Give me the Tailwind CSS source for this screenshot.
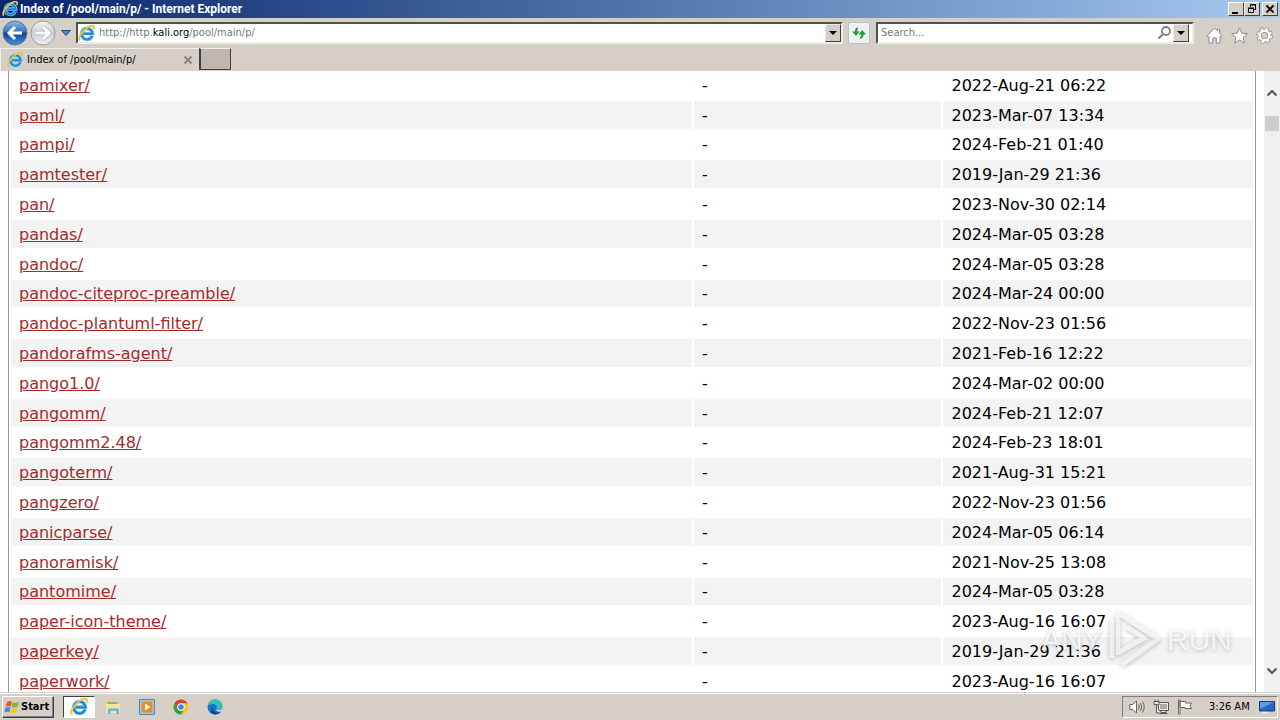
<!DOCTYPE html>
<html lang="en">

<head>
    <meta charset="UTF-8" />
    <meta name="viewport" content="width=device-width, initial-scale=1.0" />
    <title>Index of /pool/main/p/</title>
    <script src="https://cdn.jsdelivr.net/npm/@tailwindcss/browser@4"></script>
</head>

<body class="h-screen flex flex-col overflow-hidden bg-[#d5cfc7] text-black text-[11px] leading-4 font-['DejaVu_Sans_Condensed','DejaVu_Sans',sans-serif]">
    <!-- Shared icons -->
    <svg class="hidden">
        <symbol id="ie" viewBox="0 0 16 16">
            <path d="M13.4 10.2A5.2 5.2 0 1 1 13.7 8H5" fill="none" stroke="#7ccdf4" stroke-width="3.4" />
            <path d="M13.4 10.2A5.2 5.2 0 1 1 13.7 8.3H5" fill="none" stroke="#2388d0" stroke-width="2" />
            <path d="M2 14.6C-.8 12.6 3.600 5.500 9.500 2 14-.6 16.200.6 14.600 4" fill="none" stroke="#f2c230" stroke-width="1.800" />
        </symbol>
        <symbol id="down" viewBox="0 0 8 8">
            <path d="M0 2h8L4 6z" fill="currentColor" />
        </symbol>
    </svg>

    <!-- TITLE BAR -->
    <header class="h-[18px] shrink-0 flex items-center pl-[2px] pr-[2px] gap-[2px] bg-linear-to-r from-[#0a246a] to-[#a6caf0] text-white">
        <svg class="size-4"><use href="#ie" /></svg>
        <h1 class="flex-1 font-bold text-[12px] font-['Roboto',sans-serif]">Index of /pool/main/p/ - Internet Explorer</h1>
        <div class="flex text-black">
            <button aria-label="Minimize" class="w-4 h-[14px] bg-[#d5cfc7] border border-white border-r-[#404040] border-b-[#404040]">
                <svg viewBox="0 0 14 12" class="w-full h-full"><path d="M3 9h6v2H3z" /></svg>
            </button>
            <button aria-label="Restore" class="w-4 h-[14px] bg-[#d5cfc7] border border-white border-r-[#404040] border-b-[#404040]">
                <svg viewBox="0 0 14 12" class="w-full h-full" fill="none" stroke="currentColor">
                    <path d="M5.500 4V1.500h5v5H9M5 2h6M3.500 5.500h5v4h-5zM3 5h6" />
                </svg>
            </button>
            <button aria-label="Close" class="ml-[2px] w-4 h-[14px] bg-[#d5cfc7] border border-white border-r-[#404040] border-b-[#404040]">
                <svg viewBox="0 0 14 12" class="w-full h-full" stroke="currentColor" stroke-width="1.800"><path d="M3.500 2.500l7 7M10.500 2.500l-7 7" /></svg>
            </button>
        </div>
    </header>

    <!-- ADDRESS BAR -->
    <div class="h-[30px] shrink-0 flex items-center pl-[2px] pr-[7px]">
        <button aria-label="Back" class="size-[26px]">
            <svg viewBox="0 0 26 26">
                <defs>
                    <linearGradient id="backFill" x2="0" y2="1">
                        <stop offset="0" stop-color="#8db9e8" />
                        <stop offset=".45" stop-color="#3976c2" />
                        <stop offset=".5" stop-color="#123f91" />
                        <stop offset="1" stop-color="#3d98e0" />
                    </linearGradient>
                    <linearGradient id="forwardFill" x2="0" y2="1">
                        <stop offset="0" stop-color="#f4f6f8" />
                        <stop offset=".5" stop-color="#c9d0d8" />
                        <stop offset="1" stop-color="#eef2f5" />
                    </linearGradient>
                </defs>
                <circle cx="13" cy="13" r="12" fill="url(#backFill)" stroke="#5a7399" />
                <path d="M20 13H8M13 7l-6 6 6 6" fill="none" stroke="#fff" stroke-width="3" />
            </svg>
        </button>
        <button aria-label="Forward" class="ml-[2px] size-[26px]">
            <svg viewBox="0 0 26 26">
                <circle cx="13" cy="13" r="12" fill="url(#forwardFill)" stroke="#9a9da0" />
                <path d="M6 13h12M13 7l6 6-6 6" fill="none" stroke="#a4a9ae" stroke-width="4" />
                <path d="M6 13h12M13 7l6 6-6 6" fill="none" stroke="#fff" stroke-width="3" />
            </svg>
        </button>
        <button aria-label="Recent pages" class="ml-1 w-3">
            <svg viewBox="0 0 12 8"><path d="M1.500 1.500h9L6 6.500z" fill="#3c8fd0" stroke="#1c4a78" /></svg>
        </button>
        <div class="ml-1 flex-1 h-[22px] flex items-center bg-white border-2 border-[#808080] border-t-[#55504a] border-l-[#55504a] border-r-[#efece8] border-b-[#efece8]">
            <svg class="size-[17px]"><use href="#ie" /></svg>
            <!-- The host stands out in black from the rest of the address -->
            <div role="textbox" aria-label="Address" contenteditable="true" class="ml-1 flex-1 text-[#777] outline-none">http://http.<span class="text-black">kali.org</span>/pool/main/p/</div>
            <button aria-label="Show address list" class="w-4 h-[18px] flex items-center justify-center bg-[#d5cfc7] border border-[#eee] border-r-[#404040] border-b-[#404040]">
                <svg class="size-2"><use href="#down" /></svg>
            </button>
        </div>
        <button aria-label="Refresh" class="ml-[5px] w-[22px] h-[22px] flex items-center justify-center bg-[#eef1f3] border border-[#b9bfc4] rounded-xs">
            <svg viewBox="0 0 16 16" class="size-4" fill="#299a2d">
                <path d="M7 2.500C4.500 2.500 4 4 4 6.500H1L5 11l3.500-4.500H6.300C6.300 4.500 6.500 4 7 4z" />
                <path d="M9 13.500c2.500 0 3.500-1.500 3.500-4H15L11.200 5 7.500 9.500h2.700c0 2-.5 2.500-1.200 2.500z" />
            </svg>
        </button>
        <div class="ml-[6px] w-[318px] h-[22px] flex items-center bg-white border-2 border-[#55504a] border-r-[#efece8] border-b-[#efece8]">
            <input type="text" aria-label="Search" placeholder="Search..." class="ml-[3px] flex-1 min-w-0 placeholder:text-[#777] outline-none" />
            <button aria-label="Go" class="size-4">
                <svg viewBox="0 0 16 16" fill="none" stroke="#808080"><circle cx="9" cy="6" r="4" stroke-width="1.800" /><path d="M6 9l-4.500 4.500" stroke-width="2.200" /></svg>
            </button>
            <button aria-label="Search options" class="mr-[3px] w-4 h-[18px] flex items-center justify-center bg-[#d5cfc7] border border-[#eee] border-r-[#404040] border-b-[#404040]">
                <svg class="size-2"><use href="#down" /></svg>
            </button>
        </div>
        <div class="ml-3 flex gap-2 pt-1">
            <button aria-label="Home" class="size-[17px]">
                <svg viewBox="0 0 17 17" fill="#fff" stroke="#8c8a88"><path d="M1 8.800L8.500 1l3 3V2.200h2.200v4L16 8.800l-1.500 1-.5-.5V16h-3.700v-5H6.700v5H3V9.300l-.7.600z" /></svg>
            </button>
            <button aria-label="Favorites" class="size-[17px]">
                <svg viewBox="0 0 17 17" fill="#fff" stroke="#8c8a88"><path d="M8.500.9l2.200 5.200 5.600.5-4.200 3.800 1.200 5.600-4.800-3-4.800 3 1.200-5.600L.7 6.600l5.600-.5z" /></svg>
            </button>
            <button aria-label="Tools" class="size-[17px]">
                <svg viewBox="0 0 17 17" fill="none">
                    <circle cx="8.500" cy="8.500" r="6.500" stroke="#8c8a88" stroke-width="3.600" stroke-dasharray="3 2.105" />
                    <circle cx="8.500" cy="8.500" r="4.700" stroke="#8c8a88" stroke-width="4" />
                    <circle cx="8.500" cy="8.500" r="6.500" stroke="#fff" stroke-width="2.200" stroke-dasharray="2.200 2.905" stroke-dashoffset="-.4" />
                    <circle cx="8.500" cy="8.500" r="4.700" stroke="#fff" stroke-width="2.400" />
                </svg>
            </button>
        </div>
    </div>

    <!-- TABS -->
    <div class="h-[23px] shrink-0 flex">
        <div class="w-[199px] flex items-center pl-[6px] pr-[7px] border-t border-l border-[#f2f0ed]">
            <svg class="size-4"><use href="#ie" /></svg>
            <a href="#" class="ml-1 flex-1">Index of /pool/main/p/</a>
            <button aria-label="Close tab" class="size-2">
                <svg viewBox="0 0 8 8" stroke="#8a8683" stroke-width="2"><path d="M.5.5l7 7M7.500.5l-7 7" /></svg>
            </button>
        </div>
        <button aria-label="New tab" class="w-8 h-[22px] bg-[#bdb6b1] border border-l-2 border-[#404040] border-t-[#eee]"></button>
    </div>

    <!-- PAGE -->
    <main class="relative flex-1 min-h-0 flex bg-white overflow-hidden">
        <div class="flex-1 mx-2 -mt-[2px] border-x border-[#999] h-max">
            <table class="w-full h-[628px] table-fixed border-separate border-spacing-[2px] text-[16px] leading-5 font-['DejaVu_Sans',sans-serif]">
                <colgroup>
                    <col class="w-[55%]" />
                    <col class="w-[20%]" />
                    <col class="w-[25%]" />
                </colgroup>
                <tbody id="listing"></tbody>
            </table>
        </div>
        <!-- Scrollbar -->
        <div class="w-4 flex flex-col items-center bg-[#f0f0f0] text-[#555]">
            <svg viewBox="0 0 12 8" class="mt-[18px] w-3 h-2" fill="none" stroke="currentColor" stroke-width="2"><path d="M1.500 6.500L6 2l4.500 4.500" /></svg>
            <div class="mt-[19px] w-[14px] h-[15px] bg-[#cdcdcd]"></div>
            <svg viewBox="0 0 12 8" class="mt-auto mb-[17px] w-3 h-2" fill="none" stroke="currentColor" stroke-width="2"><path d="M1.500 1.500L6 6l4.500-4.500" /></svg>
        </div>

        <!-- Watermark -->
        <div class="absolute right-12 bottom-5 flex items-center gap-1 pointer-events-none text-white/70 text-[30px] leading-[64px] font-['Liberation_Sans',sans-serif] drop-shadow-[0_1px_2px_rgba(0,0,0,0.35)]">
            <span>ANY</span>
            <svg viewBox="0 0 56 64" class="w-14 h-16" fill="none" stroke="currentColor" stroke-width="5" stroke-linejoin="round">
                <path d="M5 12v38M11 5l40 26-36 26M11 5v40l26-15-17-11" />
            </svg>
            <span>RUN</span>
        </div>
    </main>

    <!-- TASKBAR -->
    <footer class="h-7 shrink-0 flex items-center pl-[2px] pr-[2px] border-t border-[#d5cfc7] shadow-[inset_0_1px_0_#fff]">
        <button class="w-[52px] h-[22px] flex items-center gap-px pl-px font-bold border border-white border-r-[#404040] border-b-[#404040] shadow-[inset_-1px_-1px_0_#808080]">
            <svg viewBox="0 0 16 16" class="size-4 shrink-0">
                <path d="M3 3c2-1.500 3.500-1 5-.2L6.800 7.500C5 6.700 3.500 6.800 1.800 7.700z" fill="#e8562a" />
                <path d="M8.800 3.200c2 1 4 .9 6.200-.4l-1.300 4.800c-2 1.200-4 1.200-6 .3z" fill="#7fba36" />
                <path d="M1.500 8.700c2-1 3.500-1 5-.2l-1.300 4.700c-1.700-.8-3.200-.7-5 .2z" fill="#3d8fe0" />
                <path d="M7.400 8.900c2 1 4 .9 6-.3l-1.300 4.800c-2 1.200-4 1.200-6 .2z" fill="#f7c52b" />
            </svg>
            Start
        </button>
        <nav class="ml-[9px] flex items-center gap-[2px]">
            <button aria-label="Internet Explorer" class="w-8 h-[22px] flex items-center justify-center bg-white border border-[#404040] border-r-white border-b-white">
                <svg class="size-[18px]"><use href="#ie" /></svg>
            </button>
            <button aria-label="File Explorer" class="w-8 h-[22px] flex items-center justify-center">
                <svg viewBox="0 0 16 16" class="size-4">
                    <path d="M1 2h5l1 1h7v11H1z" fill="#e8ca63" />
                    <path d="M3 3h9v3H3z" fill="#7dbf72" />
                    <path d="M1 5h14v9H1z" fill="#f5e49b" />
                    <path d="M3 15V9.500h11V15h-2.500v-3h-6v3z" fill="#68b5e0" />
                </svg>
            </button>
            <button aria-label="Media Player" class="w-8 h-[22px] flex items-center justify-center">
                <svg viewBox="0 0 16 16" class="size-4">
                    <path d="M.5.5h15v15H.5z" fill="#9bc3e6" stroke="#5688b5" />
                    <rect x="2.500" y="2.500" width="11" height="11" rx="3" fill="#f28a1b" />
                    <path d="M6 4.500v7L11.500 8z" fill="#fff" />
                </svg>
            </button>
            <button aria-label="Chrome" class="w-8 h-[22px] flex items-center justify-center">
                <svg viewBox="0 0 16 16" class="size-4">
                    <circle cx="8" cy="8" r="7.500" fill="#f9c81e" />
                    <path d="M1.500 4.250A7.500 7.500 0 0 1 14.500 4.250H8A3.750 3.750 0 0 0 4.750 9.900z" fill="#df3f32" />
                    <path d="M1.500 4.250A7.500 7.500 0 0 0 8 15.500l3.250-5.600a3.750 3.750 0 0 1-6.500 0z" fill="#2d9e4b" />
                    <circle cx="8" cy="8" r="3.700" fill="#fff" />
                    <circle cx="8" cy="8" r="2.800" fill="#3f7fe8" />
                </svg>
            </button>
            <button aria-label="Edge" class="w-8 h-[22px] flex items-center justify-center">
                <svg viewBox="0 0 16 16" class="size-4">
                    <circle cx="8" cy="8" r="7.500" fill="#1474c8" />
                    <path d="M.7 7C1.500 2.800 4.500.5 8 .5c4.500 0 7.500 3 7.500 6.500 0 2.500-2 3.700-4 3.700-1.500 0-2.400-.6-1.900-1.300C10.500 7.500 9 5 6 5 3.500 5 1.500 6 .7 7z" fill="#35c1b5" />
                    <path d="M5.500 8.500c0 3 2.500 5 5.500 5 1.200 0 2.200-.4 3-1-1.300 2-3.500 3-6 3-3 0-5.500-3-2.500-7z" fill="#114a8b" />
                    <path d="M9.600 9.400c-.5.700.4 1.500 1.900 1.500 2 0 3.500-.7 4.300-2.400V12l-2 .5c-3 1-5.500-1-4.200-3.100z" fill="#d5cfc7" />
                </svg>
            </button>
        </nav>
        <div class="ml-auto w-[156px] h-[22px] flex items-center pl-[6px] border border-[#808080] border-r-white border-b-white">
            <svg viewBox="0 0 16 16" class="size-4" fill="#fff" stroke="#666">
                <path d="M.8 5.500h3L7.500 2v12L3.800 10.500h-3z" />
                <path d="M9.500 5.500q1.500 2.500 0 5M11.500 4q2.500 4 0 8M13.500 2.500q3.500 5.500 0 11" fill="none" />
            </svg>
            <svg viewBox="0 0 16 16" class="ml-2 size-4" fill="#eee" stroke="#555">
                <path d="M5.500 3.500h10v8h-10zM8 11.500v2h5v-2M6.500 14.500h8" />
                <path d="M7 5h7v5H7z" fill="#aaa" stroke="none" />
                <path d="M1 2.500h5v3.200H1zM2 .5v2M5 .5v2M3.500 6v8h3" />
            </svg>
            <svg viewBox="0 0 16 16" class="ml-2 size-4" fill="#fff" stroke="#666">
                <path d="M1.500 1h1.500v14H1.500zM3 2.500h5.500v1.500h6L13 6.500l1.500 3H8V8.500H3z" />
            </svg>
            <time class="ml-4 flex-1 whitespace-nowrap">3:26 AM</time>
            <svg viewBox="0 0 16 14" class="mr-[2px] w-4 h-[14px]">
                <path d="M.5 1.500h15v9.500H.5z" fill="#2567c4" stroke="#123a78" />
                <path d="M1 2h14L1 9z" fill="#5c9ce6" />
                <path d="M3 12.500h6" stroke="#eee" stroke-width="1.500" />
            </svg>
        </div>
    </footer>

    <script>
        const packages = [
            ['pamixer/', '2022-Aug-21 06:22'],
            ['paml/', '2023-Mar-07 13:34'],
            ['pampi/', '2024-Feb-21 01:40'],
            ['pamtester/', '2019-Jan-29 21:36'],
            ['pan/', '2023-Nov-30 02:14'],
            ['pandas/', '2024-Mar-05 03:28'],
            ['pandoc/', '2024-Mar-05 03:28'],
            ['pandoc-citeproc-preamble/', '2024-Mar-24 00:00'],
            ['pandoc-plantuml-filter/', '2022-Nov-23 01:56'],
            ['pandorafms-agent/', '2021-Feb-16 12:22'],
            ['pango1.0/', '2024-Mar-02 00:00'],
            ['pangomm/', '2024-Feb-21 12:07'],
            ['pangomm2.48/', '2024-Feb-23 18:01'],
            ['pangoterm/', '2021-Aug-31 15:21'],
            ['pangzero/', '2022-Nov-23 01:56'],
            ['panicparse/', '2024-Mar-05 06:14'],
            ['panoramisk/', '2021-Nov-25 13:08'],
            ['pantomime/', '2024-Mar-05 03:28'],
            ['paper-icon-theme/', '2023-Aug-16 16:07'],
            ['paperkey/', '2019-Jan-29 21:36'],
            ['paperwork/', '2023-Aug-16 16:07']
        ];

        const listing = document.getElementById('listing');

        listing.innerHTML = packages.map(([name, date]) => `
            <tr class="even:[&>td]:bg-[#f3f3f3]">
                <td class="px-2 pt-[2px]"><a href="#" class="text-[#a52a2a] underline">${name}</a></td>
                <td class="px-2 pt-[2px]">-</td>
                <td class="px-2 pt-[2px]">${date}</td>
            </tr>
        `).join('');
    </script>
</body>

</html>
